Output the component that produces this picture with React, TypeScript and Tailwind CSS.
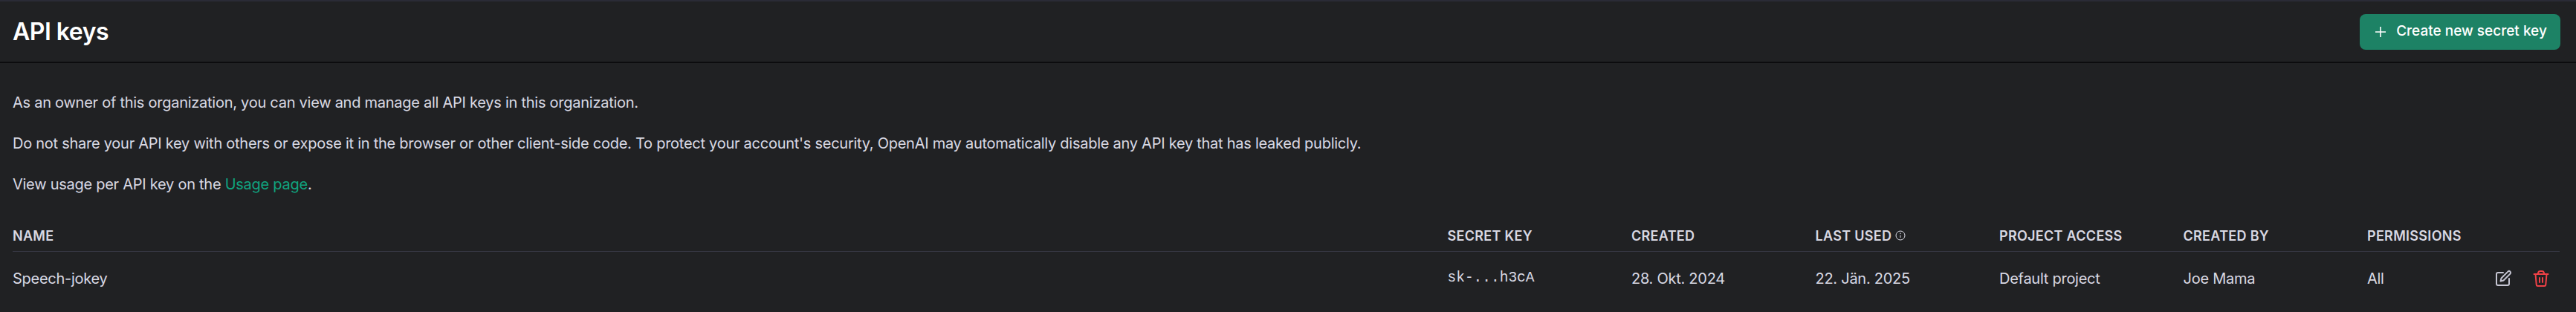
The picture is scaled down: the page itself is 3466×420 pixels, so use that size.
const columns = [
  { label: 'SECRET KEY', width: 'w-[247.5px]' },
  { label: 'CREATED', width: 'w-[247.5px]' },
  { label: 'LAST USED', width: 'w-[247.5px]', info: true },
  { label: 'PROJECT ACCESS', width: 'w-[247.5px]' },
  { label: 'CREATED BY', width: 'w-[247.5px]' },
  { label: 'PERMISSIONS', width: 'w-[259px]' },
]

function InfoIcon() {
  return (
    <svg width="14" height="14" viewBox="0 0 14 14" fill="none" stroke="currentColor" strokeWidth="1" className="mb-[2px] ml-[5px]">
      <circle cx="7" cy="7" r="6" />
      <path d="M7 6.5v3.5" />
      <circle cx="7" cy="4.2" r="0.4" />
    </svg>
  )
}

function EditIcon() {
  return (
    <svg width="24" height="24" viewBox="0 0 24 24" fill="none" stroke="currentColor" strokeWidth="2" strokeLinecap="round" strokeLinejoin="round">
      <path d="M12 4H5a2 2 0 0 0-2 2v13a2 2 0 0 0 2 2h13a2 2 0 0 0 2-2v-7" />
      <path d="M18.4 2.6a2 2 0 0 1 3 3L12.5 14.5 8.5 15.5l1-4z" />
    </svg>
  )
}

function TrashIcon() {
  return (
    <svg width="24" height="24" viewBox="0 0 24 24" fill="none" stroke="currentColor" strokeWidth="2" strokeLinecap="round" strokeLinejoin="round">
      <path d="M2.5 6h19" />
      <path d="M4.5 6l1.2 14a2 2 0 0 0 2 2h8.6a2 2 0 0 0 2-2L19.5 6" />
      <path d="M8 6V4.5A3 3 0 0 1 11 2h2a3 3 0 0 1 3 2.5V6" />
      <path d="M10 11v6M14 11v6" />
    </svg>
  )
}

export default function App() {
  return (
    <div className="h-[420px] w-full overflow-hidden border-t-[2px] border-[#2a2b36] bg-[#202123] font-['Inter',sans-serif] text-[#d9d9e3]">
      <header className="flex h-[83px] items-center justify-between border-b-[2px] border-[#0c0c0e] pl-[17px] pr-[21px]">
        <h1 className="text-[32px] font-semibold tracking-[-0.5px] text-white">API keys</h1>
        <button className="flex h-[48px] w-[270px] items-center justify-center gap-[11px] rounded-[8px] bg-[#1d8265] text-[19px] font-medium text-white">
          <svg width="20" height="20" viewBox="0 0 20 20" fill="none" stroke="currentColor" strokeWidth="1.6">
            <path d="M10 3v14M3 10h14" />
          </svg>
          Create new secret key
        </button>
      </header>

      <main className="pl-[17px] pr-[22px] pt-[41px]">
        <div className="flex flex-col gap-[31px] text-[20px] leading-[24px] tracking-[-0.26px]">
          <p>As an owner of this organization, you can view and manage all API keys in this organization.</p>
          <p>Do not share your API key with others or expose it in the browser or other client-side code. To protect your account's security, OpenAI may automatically disable any API key that has leaked publicly.</p>
          <p>
            View usage per API key on the <span className="text-[#10a37f]">Usage page</span>.
          </p>
        </div>

        <div className="mt-[48px] flex h-[31px] items-start border-b-[1px] border-[#353642] text-[18px] font-semibold leading-[20px] tracking-[0.3px]">
          <div className="flex-1">NAME</div>
          {columns.map((col) => (
            <div key={col.label} className={`flex items-center ${col.width}`}>
              {col.label}
              {col.info && <InfoIcon />}
            </div>
          ))}
        </div>

        <div className="flex h-[72px] items-center text-[20px] tracking-[-0.26px]">
          <div className="flex-1">Speech-jokey</div>
          <div className="w-[247.5px] font-['Liberation_Mono',monospace] text-[19.5px] tracking-normal">sk-...h3cA</div>
          <div className="w-[247.5px]">28. Okt. 2024</div>
          <div className="w-[247.5px]">22. Jän. 2025</div>
          <div className="w-[247.5px]">Default project</div>
          <div className="w-[247.5px]">Joe Mama</div>
          <div className="flex w-[259px] items-center">
            <span className="flex-1">All</span>
            <span className="flex items-center gap-[27px] pr-[13px]">
              <span className="text-[#c5c5d2]"><EditIcon /></span>
              <span className="text-[#ef4146]"><TrashIcon /></span>
            </span>
          </div>
        </div>
      </main>
    </div>
  )
}
